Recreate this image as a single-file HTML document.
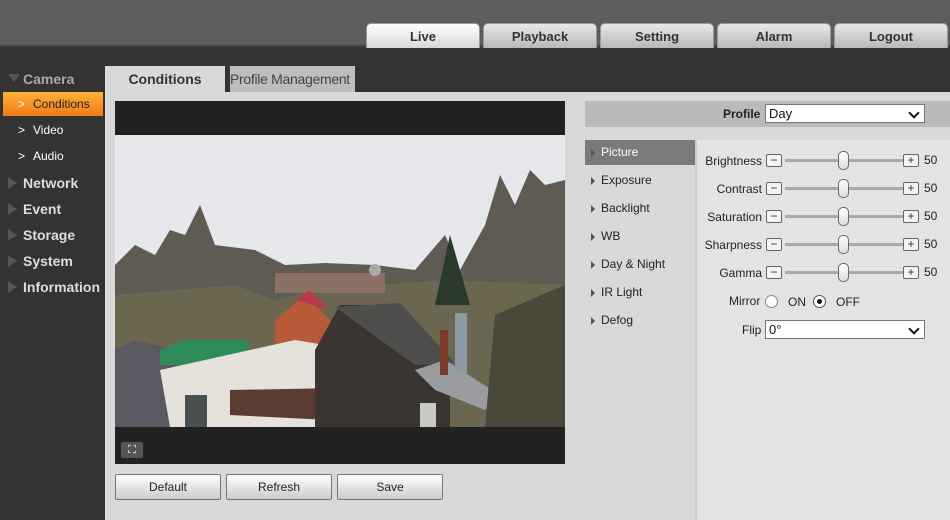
<!DOCTYPE html><html><head><style>
*{margin:0;padding:0;box-sizing:border-box}
body{width:950px;height:520px;overflow:hidden;background:#333;font-family:"Liberation Sans",Arial,sans-serif;font-size:12px;position:relative}
.a{position:absolute;white-space:nowrap}
.top{left:0;top:0;width:950px;height:47px;background:#5d5d5d;border-bottom:2px solid #444}
.tab{top:23px;height:25px;width:114px;border-radius:5px 5px 0 0;background:linear-gradient(#e8e8e8,#b8b8b8);border:1px solid #999;border-bottom:none;text-align:center;font-weight:bold;font-size:13px;line-height:25px;color:#333}
.tab.on{background:linear-gradient(#fff,#d8d8d8)}
.side{color:#ddd;font-weight:bold;font-size:14px;left:23px}
.tri{left:8px;width:0;height:0;border-top:6px solid transparent;border-bottom:6px solid transparent;border-left:9px solid #555}
.sub{color:#fff;font-size:12px;left:33px}
.chev{left:18px;color:#fff;font-size:12px}
.btn{top:474px;width:106px;height:26px;border:1px solid #777;border-radius:2px;background:linear-gradient(#fff,#ccc);text-align:center;line-height:24px;font-size:12px;color:#222}
.mi{left:585px;width:110px;height:25px;line-height:25px;padding-left:16px;color:#222}
.mi:before{content:"";position:absolute;left:6px;top:9px;border-top:4px solid transparent;border-bottom:4px solid transparent;border-left:4px solid #555}
.lbl{width:80px;text-align:right;left:682px;color:#222}
.mb{width:16px;height:13px;border:1px solid #666;border-radius:2px;background:#f4f4f4;font-size:12px;line-height:10px;text-align:center;color:#333}
.trk{left:785px;width:118px;height:3px;background:#aaa}
.knob{left:838px;width:11px;height:19px;border:1px solid #666;border-radius:5px;background:linear-gradient(#fff,#ddd)}
.sel{background:#fff;border:1px solid #777;height:19px;line-height:17px;padding-left:3px;font-size:13px;color:#111}
.sel:after{content:"";position:absolute;right:6px;top:4px;width:6px;height:6px;border-right:2px solid #111;border-bottom:2px solid #111;transform:rotate(45deg)}
</style></head><body>
<div class="a top"></div>
<div class="a tab on" style="left:366px">Live</div>
<div class="a tab" style="left:483px">Playback</div>
<div class="a tab" style="left:600px">Setting</div>
<div class="a tab" style="left:717px">Alarm</div>
<div class="a tab" style="left:834px">Logout</div>

<div class="a" style="left:8px;top:74px;border-left:6px solid transparent;border-right:6px solid transparent;border-top:8px solid #555"></div>
<div class="a side" style="top:71px;color:#aaa">Camera</div>
<div class="a" style="left:3px;top:92px;width:100px;height:24px;background:linear-gradient(#fdb13a,#f07a18)"></div>
<div class="a chev" style="top:97px">&gt;</div><div class="a sub" style="top:97px;color:#222">Conditions</div>
<div class="a chev" style="top:123px">&gt;</div><div class="a sub" style="top:123px">Video</div>
<div class="a chev" style="top:149px">&gt;</div><div class="a sub" style="top:149px">Audio</div>
<div class="a tri" style="top:177px"></div><div class="a side" style="top:175px">Network</div>
<div class="a tri" style="top:203px"></div><div class="a side" style="top:201px">Event</div>
<div class="a tri" style="top:229px"></div><div class="a side" style="top:227px">Storage</div>
<div class="a tri" style="top:255px"></div><div class="a side" style="top:253px">System</div>
<div class="a tri" style="top:281px"></div><div class="a side" style="top:279px">Information</div>

<div class="a" style="left:105px;top:66px;width:120px;height:27px;background:#d9d9d9;text-align:center;line-height:26px;font-weight:bold;font-size:14px;color:#333">Conditions</div>
<div class="a" style="left:230px;top:66px;width:125px;height:26px;background:#bdbdbd;line-height:26px;font-size:14px;color:#444;overflow:hidden;letter-spacing:-0.3px">Profile Management</div>
<div class="a" style="left:105px;top:92px;width:845px;height:428px;background:#d9d9d9"></div>

<div class="a" style="left:115px;top:101px;width:450px;height:363px;background:#222"></div>
<svg class="a" style="left:115px;top:135px" width="450" height="292" viewBox="0 0 450 292">
<rect width="450" height="292" fill="#e6e8ec"/>
<path d="M0 130 L20 110 L40 120 L55 95 L70 100 L85 70 L100 110 L140 115 L170 130 L210 128 L260 130 L300 135 L330 100 L345 135 L370 90 L385 40 L400 70 L415 35 L430 50 L450 45 L450 292 L0 292Z" fill="#5f5b52"/>
<path d="M0 160 L120 150 L160 165 L200 155 L260 150 L330 145 L450 150 L450 292 L0 292Z" fill="#6b6650"/>
<rect x="160" y="138" width="110" height="20" fill="#8a7065"/>
<circle cx="260" cy="135" r="6" fill="#aaa"/>
<path d="M0 215 L20 205 L60 215 L60 292 L0 292Z" fill="#5a5860"/>
<path d="M45 215 L70 205 L135 205 L130 230 L45 230Z" fill="#2f8a5a"/>
<path d="M160 185 L190 160 L215 185 L215 235 L160 235Z" fill="#b85a3a"/>
<path d="M180 165 L195 155 L215 175Z" fill="#b83a4a"/>
<path d="M45 235 L180 205 L210 210 L210 292 L55 292Z" fill="#e4e2da"/>
<rect x="70" y="260" width="22" height="32" fill="#4a4f50"/>
<path d="M115 255 L225 253 L215 285 L115 280Z" fill="#5a3c30"/>
<path d="M200 215 L225 170 L285 170 L335 230 L335 292 L200 292Z" fill="#3a3530"/>
<path d="M220 172 L285 168 L340 228 L300 230Z" fill="#4e4e4c"/>
<path d="M300 235 L330 225 L385 260 L370 275 L320 255Z" fill="#9a9ca0"/>
<rect x="340" y="178" width="12" height="60" fill="#8c9aa4"/>
<rect x="325" y="195" width="8" height="45" fill="#7a3a2a"/>
<rect x="305" y="268" width="16" height="24" fill="#c8c8c4"/>
<path d="M335 100 L355 170 L320 170Z" fill="#2a3a2a"/>
<path d="M380 180 L450 150 L450 292 L370 292Z" fill="#4a4838"/>
</svg>
<div class="a" style="left:121px;top:442px;width:22px;height:16px;background:#555;border-radius:2px;color:#fff;font-size:11px;line-height:16px;text-align:center">⛶</div>

<div class="a btn" style="left:115px">Default</div>
<div class="a btn" style="left:226px">Refresh</div>
<div class="a btn" style="left:337px">Save</div>

<div class="a" style="left:585px;top:101px;width:365px;height:26px;background:#bababa"></div>
<div class="a" style="left:723px;top:107px;font-weight:bold;color:#222">Profile</div>
<div class="a sel" style="left:765px;top:104px;width:160px">Day</div>
<div class="a" style="left:695px;top:140px;width:255px;height:380px;background:#e3e3e3;border-left:2px solid #ccc"></div>
<div class="a mi" style="top:140px;background:#7a7a7a;color:#fff">Picture</div>
<div class="a mi" style="top:168px">Exposure</div>
<div class="a mi" style="top:196px">Backlight</div>
<div class="a mi" style="top:224px">WB</div>
<div class="a mi" style="top:252px">Day &amp; Night</div>
<div class="a mi" style="top:280px">IR Light</div>
<div class="a mi" style="top:308px">Defog</div>

<div class="a lbl" style="top:154px">Brightness</div>
<div class="a lbl" style="top:182px">Contrast</div>
<div class="a lbl" style="top:210px">Saturation</div>
<div class="a lbl" style="top:238px">Sharpness</div>
<div class="a lbl" style="top:266px">Gamma</div>
<div class="a trk" style="top:159px"></div><div class="a trk" style="top:187px"></div><div class="a trk" style="top:215px"></div><div class="a trk" style="top:243px"></div><div class="a trk" style="top:271px"></div>
<div class="a mb" style="left:766px;top:154px">−</div><div class="a mb" style="left:903px;top:154px">+</div>
<div class="a mb" style="left:766px;top:182px">−</div><div class="a mb" style="left:903px;top:182px">+</div>
<div class="a mb" style="left:766px;top:210px">−</div><div class="a mb" style="left:903px;top:210px">+</div>
<div class="a mb" style="left:766px;top:238px">−</div><div class="a mb" style="left:903px;top:238px">+</div>
<div class="a mb" style="left:766px;top:266px">−</div><div class="a mb" style="left:903px;top:266px">+</div>
<div class="a knob" style="top:151px"></div><div class="a knob" style="top:179px"></div><div class="a knob" style="top:207px"></div><div class="a knob" style="top:235px"></div><div class="a knob" style="top:263px"></div>
<div class="a" style="left:924px;top:153px;color:#222">50</div><div class="a" style="left:924px;top:181px;color:#222">50</div><div class="a" style="left:924px;top:209px;color:#222">50</div><div class="a" style="left:924px;top:237px;color:#222">50</div><div class="a" style="left:924px;top:265px;color:#222">50</div>

<div class="a" style="left:729px;top:294px;color:#222">Mirror</div>
<div class="a" style="left:765px;top:295px;width:13px;height:13px;border:1px solid #888;border-radius:50%;background:#fff"></div>
<div class="a" style="left:788px;top:295px;color:#222">ON</div>
<div class="a" style="left:813px;top:295px;width:13px;height:13px;border:1px solid #555;border-radius:50%;background:#fff"><div style="margin:3px;width:5px;height:5px;border-radius:50%;background:#111"></div></div>
<div class="a" style="left:836px;top:295px;color:#222">OFF</div>
<div class="a" style="left:742px;top:323px;color:#222">Flip</div>
<div class="a sel" style="left:765px;top:320px;width:160px">0°</div>
</body></html>
